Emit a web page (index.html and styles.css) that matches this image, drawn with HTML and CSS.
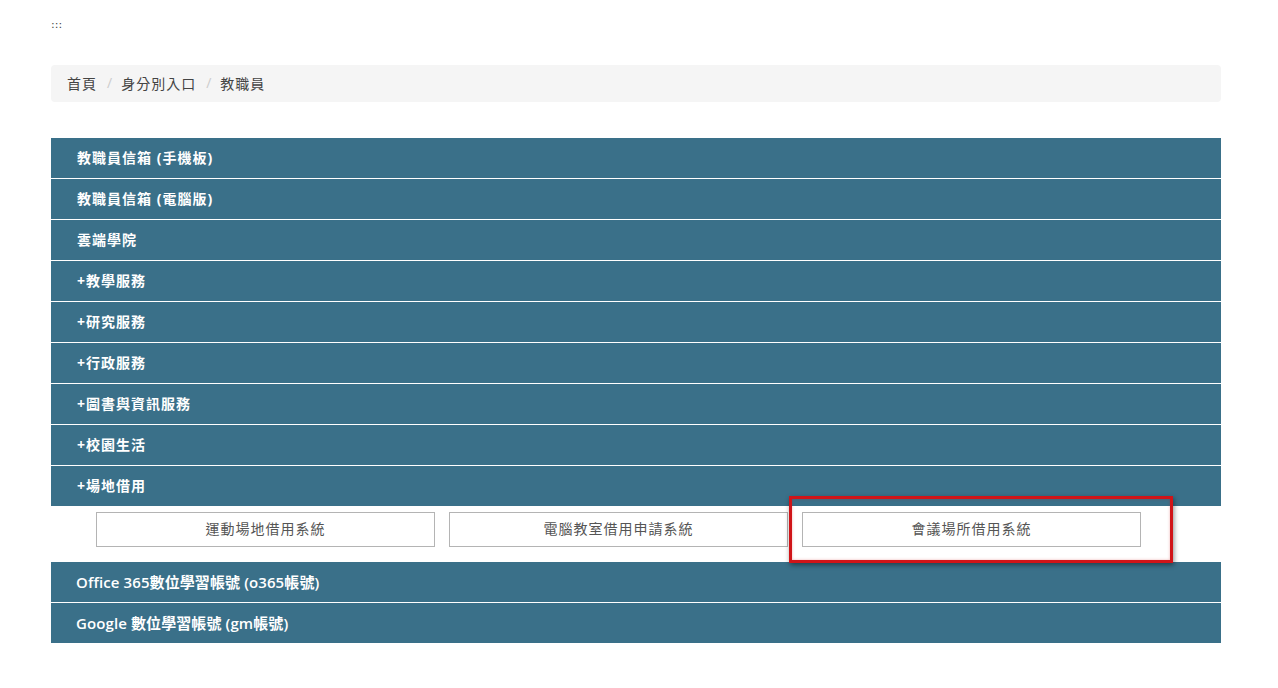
FILE: index.html
```html
<!DOCTYPE html>
<html lang="zh-Hant">
<head>
<meta charset="utf-8">
<title>教職員</title>
<link rel="stylesheet" href="styles.css">
</head>
<body>
<div class="container">
  <div class="access">:::</div>
  <ol class="breadcrumb">
    <li>首頁</li>
    <li class="sep">/</li>
    <li>身分別入口</li>
    <li class="sep">/</li>
    <li>教職員</li>
  </ol>
  <div class="panels">
    <div class="heading">教職員信箱 (手機板)</div>
    <div class="heading">教職員信箱 (電腦版)</div>
    <div class="heading">雲端學院</div>
    <div class="heading">+教學服務</div>
    <div class="heading">+研究服務</div>
    <div class="heading">+行政服務</div>
    <div class="heading">+圖書與資訊服務</div>
    <div class="heading">+校園生活</div>
    <div class="heading">+場地借用</div>
    <div class="sub">
      <a class="btn">運動場地借用系統</a>
      <a class="btn">電腦教室借用申請系統</a>
      <a class="btn highlight">會議場所借用系統</a>
    </div>
    <div class="heading latin">Office 365數位學習帳號 (o365帳號)</div>
    <div class="heading latin">Google 數位學習帳號 (gm帳號)</div>
  </div>
</div>
</body>
</html>
```

FILE: styles.css
```css
*, *::before, *::after { box-sizing: border-box; }
body {
  margin: 0;
  background: #fff;
  font-family: "Open Sans", "Noto Sans CJK TC", sans-serif;
  color: #333;
}
.container {
  width: 1170px;
  margin: 0 0 0 51px;
}
.access {
  font-family: "DejaVu Sans", sans-serif;
  font-size: 11px;
  line-height: 14px;
  color: #444;
  padding-top: 18px;
  height: 65px;
}
.breadcrumb {
  list-style: none;
  margin: 0;
  padding: 0 16px;
  height: 37px;
  background: #f5f5f5;
  border-radius: 4px;
  display: flex;
  align-items: center;
  font-size: 14px;
  letter-spacing: 1px;
  color: #444;
  padding-bottom: 2px;
}
.breadcrumb .sep {
  color: #ccc;
  padding: 0 9px 0 10px;
  letter-spacing: 0;
}
.panels {
  margin-top: 36px;
}
.heading {
  height: 41px;
  background: #3a7089;
  border-bottom: 1px solid #fff;
  color: #fff;
  font-weight: 700;
  font-size: 14px;
  letter-spacing: 1px;
  display: flex;
  align-items: center;
  padding-left: 26px;
  padding-bottom: 2px;
}
.heading.latin {
  font-size: 15px;
  font-weight: 600;
  letter-spacing: 0.1px;
  padding-left: 25px;
}
.heading:last-child { height: 40px; border-bottom: none; }
.sub {
  height: 56px;
  margin-top: -1px;
  display: flex;
  gap: 14px;
  padding: 6px 0 0 45px;
}
.btn {
  position: relative;
  width: 339px;
  height: 35px;
  border: 1px solid #b4b4b4;
  background: #fff;
  color: #555;
  font-size: 14px;
  letter-spacing: 1px;
  display: flex;
  align-items: center;
  justify-content: center;
  padding-bottom: 4px;
}
.btn.highlight::after {
  content: "";
  position: absolute;
  left: -14px;
  top: -17px;
  width: 384px;
  height: 67px;
  border: 3px solid #d01418;
  box-shadow: 1px 2px 5px rgba(0,0,0,0.45), inset 0 0 3px rgba(200,0,0,0.3);
}
```
